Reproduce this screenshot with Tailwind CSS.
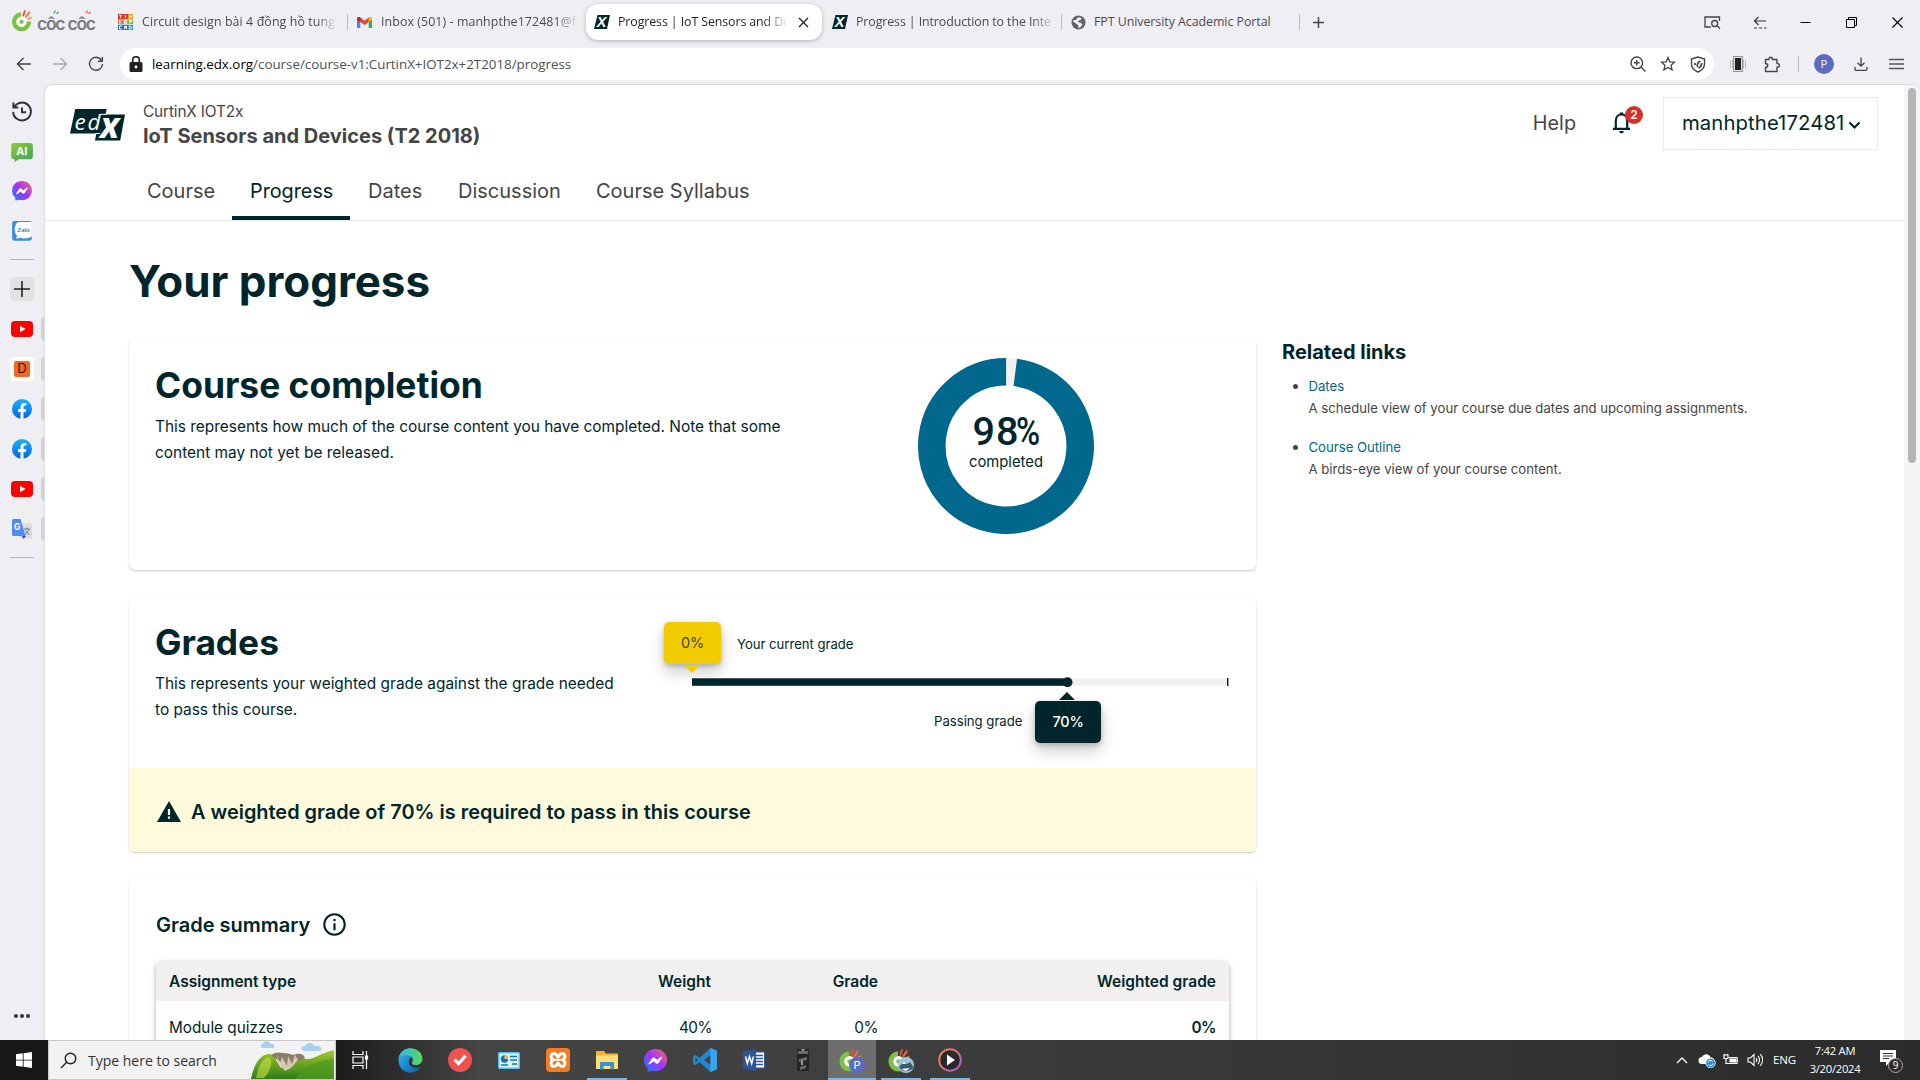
<!DOCTYPE html>
<html lang="en">
<head>
<meta charset="utf-8">
<title>Progress | IoT Sensors and Devices</title>
<script src="https://cdn.jsdelivr.net/npm/@tailwindcss/browser@4"></script>
</head>
<body class="relative flex h-[1080px] w-[1920px] flex-col overflow-hidden bg-[#efeef3] font-['Inter',sans-serif] text-[#454545]">

<svg class="absolute" width="0" height="0">
  <defs>
    <linearGradient id="msg" x1="0" y1="1" x2="1" y2="0"><stop offset="0" stop-color="#0a84ff"/><stop offset=".5" stop-color="#a033ff"/><stop offset="1" stop-color="#ff6968"/></linearGradient>
    <linearGradient id="fbg" x1="0" y1="0" x2="0" y2="1"><stop offset="0" stop-color="#18b0fb"/><stop offset="1" stop-color="#0165e1"/></linearGradient>
    <linearGradient id="aig" x1="0" y1="0" x2="1" y2="1"><stop offset="0" stop-color="#9ac832"/><stop offset="1" stop-color="#39a860"/></linearGradient>
    <linearGradient id="edg" x1="0" y1="0" x2="1" y2="1"><stop offset="0" stop-color="#35c1f1"/><stop offset=".45" stop-color="#1b8fd8"/><stop offset="1" stop-color="#0c59a4"/></linearGradient>
    <linearGradient id="edg2" x1="0" y1="0" x2="1" y2="0"><stop offset="0" stop-color="#2fb8ee"/><stop offset="1" stop-color="#5bd95a"/></linearGradient>
    <linearGradient id="hill" x1="0" y1="0" x2="0" y2="1"><stop offset="0" stop-color="#a5c92c"/><stop offset="1" stop-color="#2f7d18"/></linearGradient>
    <linearGradient id="mp" x1="0" y1="0" x2="1" y2="1"><stop offset="0" stop-color="#f58634"/><stop offset="1" stop-color="#a65bd6"/></linearGradient>
    <symbol id="messenger" viewBox="0 0 24 24"><path fill="url(#msg)" d="M12 0C5.2 0 0 5 0 11.600c0 3.500 1.400 6.500 3.700 8.600L4 24l4-1.200c1.300.3 2.600.5 4 .5 6.800 0 12-5 12-11.700S18.800 0 12 0z"/><path fill="#fff" d="M4.800 15.200 8.400 9.600c.6-.9 1.800-1.100 2.700-.5l2.600 2 4.200-3c.6-.4 1.300.2.900.9l-3.500 5.500c-.6.9-1.800 1.100-2.700.5l-2.600-2-4.200 3c-.6.4-1.400-.2-1-.8z"/></symbol>
    <symbol id="yt" viewBox="0 0 22 16"><rect width="22" height="16" rx="4" fill="#f00"/><path fill="#fff" d="M9 4.700v6.600l5.500-3.300z"/></symbol>
    <symbol id="fb" viewBox="0 0 20 20"><circle cx="10" cy="10" r="10" fill="url(#fbg)"/><path fill="#fff" d="M8.500 20v-7H6v-3h2.500V8c0-2.600 1.500-4 3.800-4 1 0 2 .2 2 .2v2.400h-1.200c-1.200 0-1.600.7-1.600 1.500V10h2.700l-.4 3h-2.300v7z"/></symbol>
    <symbol id="edxfav" viewBox="0 0 16 16"><path fill="#00262b" d="M3.500 1H16l-3 14H0z"/><text x="2.700" y="13.400" font-size="14.500" font-weight="800" font-style="italic" fill="#fff" font-family="Liberation Sans">X</text></symbol>
    <symbol id="coc" viewBox="0 0 22 26"><path fill="#7cc142" d="M10 4.500A10.500 10.500 0 1 0 21 15l-5.200-.5A5.500 5.500 0 1 1 10 9.600z"/><circle cx="10.500" cy="15" r="5.600" fill="#fff"/><circle cx="10.500" cy="15" r="2.300" fill="#7cc142"/><path stroke="#e8502e" stroke-width="2" stroke-linecap="round" d="m12.500 8 1.500-5"/><path stroke="#f36d3b" stroke-width="2" stroke-linecap="round" d="m15.500 9.500 3.500-5"/><path stroke="#f58b54" stroke-width="1.600" stroke-linecap="round" d="m18 12 3-2"/></symbol>
  </defs>
</svg>

<!-- tab strip -->
<div class="flex h-12 shrink-0 items-start pt-1 font-['Open_Sans',sans-serif] text-[12.400px] text-[#4a4a4e]">
  <div class="flex h-9 w-[106px] items-center pl-3">
    <svg width="84" height="26" viewBox="0 0 84 26"><use href="#coc" width="20" height="24" x="0" y="-1"/><text x="25" y="21" font-family="Inter" font-size="17.500" font-weight="600" fill="#7b7b7e" textLength="59">côc côc</text><path stroke="#4caf50" stroke-width="1.300" d="m42 4.500 1.500-3m1 3.500 2-2"/><path stroke="#f4623a" stroke-width="1.300" d="m74 4.500 1.500-3m1 3.500 2-2"/></svg>
  </div>
  <div class="flex h-9 w-[241px] items-center pl-3">
    <svg width="15" height="16" viewBox="0 0 15 16"><path fill="#e8322c" d="M0 0h5v5H0zM5 0h5v5H5z"/><path fill="#f39a1f" d="M10 0h5v5h-5zM5 5.500h5v4.500H5z"/><path fill="#f2602a" d="M0 5.500h5v4.500H0z"/><path fill="#74b742" d="M10 5.500h5v4.500h-5z"/><path fill="#1e74bb" d="M0 10.800h5V16H0zM5 10.800h5V16H5z"/><path fill="#2f95d0" d="M10 10.800h5V16h-5z"/><path stroke="#fff" stroke-width="1" fill="none" d="M1 1.500h3M2.500 1.500v2.500M7.500 1v3M11.500 4V1.300l2 2.400V1M1.500 6v3.500M3.500 6 2 7.800l1.500 1.700M9 6.300H6.500v3H9M6.500 7.800h2M11.500 9.500V6.300h2v1.500h-2M3.800 12H1.500v3h2.300M6.500 15.200v-3h2v3M6.500 13.800h2M11.500 12.200v3h1l1-1v-1l-1-1z"/></svg>
    <span class="ml-[9px] w-[193px] overflow-hidden whitespace-nowrap tracking-[0.1px] [mask-image:linear-gradient(to_right,#000_175px,transparent_195px)]">Circuit design bài 4 đồng hồ tung</span>
  </div>
  <div class="flex h-9 w-[239px] items-center">
    <span class="h-4 w-px bg-[#bdbcc2]"></span>
    <svg class="ml-[9px]" width="15" height="11" viewBox="0 0 15 11"><path fill="#4285f4" d="M0 1.500V11h3.300V5z"/><path fill="#34a853" d="M15 1.500V11h-3.300V5z"/><path fill="#ea4335" d="M0 1.500C0 0 2-.6 3.300.5L7.500 3.800 11.700.5C13 -.6 15 0 15 1.500L11.700 5 7.500 8 3.300 5z"/><path fill="#c5221f" d="M0 1.500C0 .2 2-.6 3.300.5V5L0 2.700z"/><path fill="#fbbc04" d="M15 1.500C15 .2 13-.6 11.700.5V5L15 2.700z"/></svg>
    <span class="ml-[9px] w-[196px] overflow-hidden whitespace-nowrap tracking-[0.080px] [mask-image:linear-gradient(to_right,#000_175px,transparent_198px)]">Inbox (501) - manhpthe172481@f</span>
  </div>
  <div class="flex h-9 w-[236px] items-center rounded-xl bg-white pl-2 text-[#1f1f22] shadow-[0_1px_4px_rgba(0,0,0,0.25)]">
    <svg width="16" height="16"><use href="#edxfav"/></svg>
    <span class="ml-2 w-[168px] overflow-hidden whitespace-nowrap tracking-[-0.100px] [mask-image:linear-gradient(to_right,#000_145px,transparent_170px)]">Progress | IoT Sensors and De</span>
    <svg class="ml-3" width="11" height="11" fill="none" stroke="#222" stroke-width="1.300"><path d="m1 1 9 9M10 1l-9 9"/></svg>
  </div>
  <div class="flex h-9 w-[239px] items-center pl-[10px]">
    <svg width="16" height="16"><use href="#edxfav"/></svg>
    <span class="ml-2 w-[196px] overflow-hidden whitespace-nowrap tracking-[-0.100px] [mask-image:linear-gradient(to_right,#000_176px,transparent_200px)]">Progress | Introduction to the Inte</span>
  </div>
  <div class="flex h-9 w-[238px] items-center">
    <span class="h-4 w-px bg-[#bdbcc2]"></span>
    <svg class="ml-[9px]" width="15" height="15" viewBox="0 0 15 15"><circle cx="7.500" cy="7.500" r="7" fill="#5f6368"/><path fill="#efeef3" d="M8 2.200 10.500 3l-.8 2-2.200.7-.5 1.600 3 .4 1.300 2-1.600 2.300-2.400 1.200.2-2.300L5.800 9 2 6.500l.4-1.200L5 5l1.200-2z"/></svg>
    <span class="ml-2 whitespace-nowrap tracking-[-0.050px]">FPT University Academic Portal</span>
  </div>
  <div class="flex h-9 items-center">
    <span class="h-4 w-px bg-[#bdbcc2]"></span>
    <svg class="ml-3" width="13" height="13" fill="none" stroke="#444" stroke-width="1.500"><path d="M6.500 1v11M1 6.500h11"/></svg>
  </div>
  <div class="ml-auto mr-[17px] flex h-9 items-center text-[#222]">
    <svg class="mr-8" width="17" height="13" viewBox="0 0 17 13" fill="none" stroke="#444" stroke-width="1.300"><path d="M7 11H1V1h14.500v4"/><circle cx="10.700" cy="7.500" r="3"/><path d="m13 9.700 3 2.800"/></svg>
    <svg class="mr-[33px]" width="14" height="13" viewBox="0 0 14 13" fill="none" stroke="#333" stroke-width="1.200"><path d="M5.500 1 1.500 5l4 4M1.500 5H13"/><path stroke-dasharray="3 2" d="M1 12h12.500"/></svg>
    <svg class="mr-[35px]" width="11" height="11"><path stroke="#000" d="M.5 5.500h10"/></svg>
    <svg class="mr-[35px]" width="11" height="11" fill="none" stroke="#000"><path d="M.5 2.500h8v8h-8zM2.500 2.500v-2h8v8h-2"/></svg>
    <svg width="11" height="11" fill="none" stroke="#000" stroke-width="1.100"><path d="m.5.5 10 10m0-10-10 10"/></svg>
  </div>
</div>

<!-- toolbar -->
<div class="flex h-8 shrink-0 items-center">
  <div class="flex w-[120px] items-center pl-4">
    <svg class="mr-[20px]" width="16" height="14" viewBox="0 0 16 14" fill="none" stroke="#444" stroke-width="1.400"><path d="M7.500 1 1.500 7l6 6M1.500 7H15"/></svg>
    <svg class="mr-[20px]" width="16" height="14" viewBox="0 0 16 14" fill="none" stroke="#a9a8ae" stroke-width="1.400"><path d="m8.500 1 6 6-6 6M14.500 7H1"/></svg>
    <svg width="16" height="16" viewBox="0 0 16 16" fill="none" stroke="#444" stroke-width="1.400"><path d="M13.300 4A6.500 6.500 0 1 0 14.500 8M14.300 1v4.300H10"/></svg>
  </div>
  <div class="flex h-8 w-[1594px] items-center rounded-full bg-white pl-[9px] pr-2">
    <svg width="14" height="17" viewBox="0 0 14 17"><path fill="#222" d="M2 6h10a1.500 1.500 0 0 1 1.500 1.500v7A1.500 1.500 0 0 1 12 16H2a1.500 1.500 0 0 1-1.500-1.500v-7A1.500 1.500 0 0 1 2 6z"/><path fill="none" stroke="#222" stroke-width="1.600" d="M3.700 7V4a3.300 3.300 0 0 1 6.600 0v3"/><circle cx="7" cy="11" r="1.400" fill="#fff"/></svg>
    <span class="ml-[9px] whitespace-nowrap font-['Open_Sans',sans-serif] text-[13.350px] text-[#4d5156]"><span class="text-black">learning.edx.org</span>/course/course-v1:CurtinX+IOT2x+2T2018/progress</span>
    <div class="ml-auto flex items-center gap-[14px]">
      <svg width="16" height="16" viewBox="0 0 16 16" fill="none" stroke="#444" stroke-width="1.400"><circle cx="6.800" cy="6.800" r="5.800"/><path d="m11 11 4.500 4.500M4 6.800h5.600M6.800 4v5.600"/></svg>
      <svg width="16" height="16" viewBox="0 0 16 16" fill="none" stroke="#444" stroke-width="1.300"><path d="m8 1.500 1.900 4.300 4.700.4-3.600 3.100 1.100 4.600L8 11.500l-4.100 2.400L5 9.300 1.400 6.200l4.700-.4z"/></svg>
      <svg width="16" height="17" viewBox="0 0 16 17" fill="none" stroke="#444" stroke-width="1.400"><path d="M8 1 1.500 3v5c0 4 3 6.500 6.500 8 3.500-1.500 6.500-4 6.500-8V3z"/><path stroke-width="1.700" d="M5.500 9 4.500 7M7.500 11c-.5-3 .5-5 3-6M8.500 12c1.500-.5 3-2 3.200-5"/></svg>
    </div>
  </div>
  <div class="ml-auto mr-[16px] flex items-center">
    <svg class="mr-[18px]" width="16" height="16" viewBox="0 0 16 16"><path fill="none" stroke="#bbb" d="M.5 4.500v8M2.500 3.500v9M13.500 3.500v9M15.500 4.500v8"/><rect x="3.500" y=".5" width="9" height="15" fill="#ddd" stroke="#999"/><rect x="5" y="2" width="6" height="12" fill="#222"/></svg>
    <svg class="mr-[17px]" width="17" height="17" viewBox="0 0 17 17" fill="none" stroke="#444" stroke-width="1.400"><path stroke-linejoin="round" d="M1.500 3.500H5c-.3-3 3.700-3 3.400 0H13v4c3.300-.2 3.300 3.800 0 3.600v4.400H1.500v-4c3-.2 3-3.800 0-4z"/></svg>
    <span class="mr-[15px] h-4 w-px bg-[#bdbcc2]"></span>
    <span class="mr-5 flex size-5 items-center justify-center rounded-full bg-[#5c6bc0] text-[10px] text-white">P</span>
    <svg class="mr-[21px]" width="14" height="14" viewBox="0 0 14 14" fill="none" stroke="#444" stroke-width="1.300"><path d="M7 .5v8.500M3.500 5.800 7 9.200l3.500-3.400M1 10v2.300c0 .6.300 1 1 1h10c.7 0 1-.4 1-1V10"/></svg>
    <svg width="15" height="12" fill="none" stroke="#555" stroke-width="1.400"><path d="M0 1.500h15M0 6h15M0 10.500h15"/></svg>
  </div>
</div>

<div class="flex h-[960px] shrink-0 pt-1">
  <!-- browser sidebar -->
  <div class="flex w-11 shrink-0 flex-col">
    <div class="flex h-[176px] flex-col items-center pt-[17px]">
      <svg width="22" height="22" viewBox="0 0 22 22" fill="none" stroke="#333" stroke-width="2"><path d="M3 6.500A9 9 0 1 1 2 11M2.300 1.500v5h5"/><path d="M11 6.500v5h4"/></svg>
      <svg class="mt-5" width="22" height="20" viewBox="0 0 22 20"><rect width="22" height="16.500" rx="3" fill="url(#aig)"/><path fill="#58b04e" d="M3.500 15v4.500L9 15z"/><text x="11" y="12.300" text-anchor="middle" font-family="Open Sans" font-weight="700" font-size="11" fill="#fff">AI</text></svg>
      <svg class="mt-[19px]" width="20" height="20"><use href="#messenger"/></svg>
      <svg class="mt-5" width="20" height="20" viewBox="0 0 20 20"><rect width="20" height="20" rx="2.500" fill="#3a8fdb"/><path fill="#fff" d="M6 1h14v14.500c-2 2-8 3-11.500 1.500L4 18l1-3C1.500 11 2 4 6 1z"/><text x="11.500" y="11" text-anchor="middle" font-size="6.500" font-weight="700" fill="#2f7fd3" font-family="Lato">Zalo</text></svg>
      <div class="mt-[18px] h-px w-6 shrink-0 bg-[#b5b4b9]"></div>
    </div>
    <div class="flex flex-col">
      <div class="mt-[17px] flex h-6 items-center pl-[10px]"><div class="flex size-6 items-center justify-center rounded bg-[#e2e2e2]"><svg width="16" height="16" stroke="#222" stroke-width="1.600"><path d="M8 0v16M0 8h16"/></svg></div></div>
      <div class="mt-4 flex h-6 items-center justify-between pl-[11px]"><svg width="22" height="16"><use href="#yt"/></svg><span class="h-6 w-[3px] rounded-l bg-[#d2d2d4]"></span></div>
      <div class="mt-4 flex h-6 items-center justify-between pl-[10px]"><span class="flex size-6 items-center justify-center rounded bg-white"><span class="flex size-4 items-center justify-center rounded-xs bg-[#f26722] text-[13px] text-[#222]">D</span></span><span class="h-6 w-[3px] rounded-l bg-[#d2d2d4]"></span></div>
      <div class="mt-4 flex h-6 items-center justify-between pl-3"><svg width="20" height="20"><use href="#fb"/></svg><span class="h-6 w-[3px] rounded-l bg-[#d2d2d4]"></span></div>
      <div class="mt-4 flex h-6 items-center justify-between pl-3"><svg width="20" height="20"><use href="#fb"/></svg><span class="h-6 w-[3px] rounded-l bg-[#d2d2d4]"></span></div>
      <div class="mt-4 flex h-6 items-center justify-between pl-[11px]"><svg width="22" height="16"><use href="#yt"/></svg><span class="h-6 w-[3px] rounded-l bg-[#d2d2d4]"></span></div>
      <div class="mt-4 flex h-6 items-center justify-between pl-3"><svg width="20" height="20" viewBox="0 0 20 20"><rect x="8" y="4.500" width="12" height="15" rx="1.500" fill="#dadce0"/><path d="M12 10h6M15 8.500V10M17 10c-.5 2.500-2.500 4.500-4 5.500M13.500 11.500c1 2 2.500 3.500 4 4" stroke="#5f7d95" fill="none"/><path fill="#3347a8" d="m10 17 1.500 3L14 17z"/><path fill="#4f8bf0" d="M1.500 0h7L13.500 17h-12A1.500 1.500 0 0 1 0 15.500v-14A1.500 1.500 0 0 1 1.500 0z"/><text x="2" y="11" font-size="8.500" font-weight="700" fill="#fff">G</text></svg><span class="h-6 w-[3px] rounded-l bg-[#d2d2d4]"></span></div>
      <div class="ml-[10px] mt-4 h-px w-6 bg-[#b5b4b9]"></div>
    </div>
    <div class="mb-[22px] mt-auto flex gap-[2px] pl-[14px]"><i class="size-1 rounded-full bg-[#333]"></i><i class="size-1 rounded-full bg-[#333]"></i><i class="size-1 rounded-full bg-[#333]"></i></div>
  </div>

  <!-- page viewport -->
  <div class="flex h-[956px] flex-1 overflow-hidden rounded-t-lg border-l border-t border-[#dcdcdf] bg-white">
    <div class="w-[1859px] shrink-0">
      <header class="border-b border-[#e7e8e9]">
        <div class="flex h-[83px] items-start pl-[25px]">
          <svg class="mt-6" width="55" height="32" viewBox="0 0 55 32"><path fill="#00262b" d="M5.200 0h31.500l-1.200 5.500H55l-4.800 26H25l1.300-7H0z"/><path stroke="#fff" stroke-width="1" fill="none" d="M25.500 24.500h4.500M30.700 5.300H37"/><text x="4.500" y="20.700" font-family="Open Sans" font-style="italic" font-size="22.500" fill="#fff" textLength="26">ed</text><text x="30" y="28.500" font-family="Open Sans" font-style="italic" font-weight="800" font-size="28.500" fill="#fff">X</text></svg>
          <div class="ml-[18px] mt-[15px]">
            <div class="text-[15.400px] leading-6 tracking-[-0.150px]">CurtinX IOT2x</div>
            <div class="text-xl font-bold leading-6">IoT Sensors and Devices (T2 2018)</div>
          </div>
          <div class="ml-auto mr-[26px] mt-3 flex items-center">
            <span class="text-[19.800px]">Help</span>
            <div class="relative -mt-1 ml-[36px] h-6 w-5">
              <svg width="20" height="24" viewBox="0 0 20 24" fill="none" stroke="#00262b" stroke-width="2.200"><path d="M1 18.800h17M3.800 19V11c0-3.500 2-6.500 5.700-6.500s5.700 3 5.700 6.500v8"/><path fill="#00262b" stroke="none" d="M7.800 2.500h3.400V5H7.800zM7.300 21h4.400c0 1.600-1 2.300-2.200 2.300S7.300 22.600 7.300 21z"/></svg>
              <span class="absolute -top-[4px] left-[13px] flex size-[18px] items-center justify-center rounded-full bg-[#d23228] text-[12px] font-semibold text-white">2</span>
            </div>
            <div class="ml-[31px] flex h-[53px] w-[215px] items-center border border-[#ebebeb] pl-[18px] text-[#00262b]">
              <span class="text-[20.300px] tracking-[0.100px]">manhpthe172481</span>
              <svg class="ml-1 mt-1" width="13" height="9" viewBox="0 0 13 9" fill="none" stroke="#00262b" stroke-width="2.200"><path d="m1.500 1.500 5 5 5-5"/></svg>
            </div>
          </div>
        </div>
        <nav class="flex h-[52px] pl-[84px] text-[20px] leading-6">
          <a class="w-[103px] pl-[18px] pt-[11px]">Course</a>
          <a class="w-[118px] border-b-4 border-[#00262b] pl-[18px] pt-[11px] text-[19.800px] text-[#00262b]">Progress</a>
          <a class="w-[90px] pl-[18px] pt-[11px]">Dates</a>
          <a class="w-[138px] pl-[18px] pt-[11px]">Discussion</a>
          <a class="pl-[18px] pt-[11px]">Course Syllabus</a>
        </nav>
      </header>

      <main class="flex flex-col pl-[84px] pt-[36px] text-[#00262b]">
        <h1 class="text-[43.900px] font-bold leading-[48px]">Your progress</h1>
        <div class="mt-[33px] flex">
          <div class="flex w-[1127px] flex-col">
            <section class="flex h-[232px] rounded-md pl-[26px] shadow-[0_1px_2px_rgba(0,0,0,0.22)]">
              <div class="w-[763px] pt-[26px]">
                <h2 class="text-[35.400px] font-bold leading-[44px]">Course completion</h2>
                <p class="mt-[6px] w-[640px] text-[15.430px] leading-[26.400px]">This represents how much of the course content you have completed. Note that some content may not yet be released.</p>
              </div>
              <svg class="mt-5" width="176" height="176" viewBox="0 0 176 176">
                <circle cx="88" cy="88" r="74.200" fill="none" stroke="#f2f0ef" stroke-width="27.600"/>
                <circle cx="88" cy="88" r="74.200" fill="none" stroke="#00688d" stroke-width="27.600" pathLength="100" stroke-dasharray="98 2" transform="rotate(-82.800 88 88)"/>
                <text x="54.500" y="86.500" font-family="Roboto" font-weight="500" font-size="39.500" fill="#00262b" letter-spacing="1">98</text>
                <text transform="translate(98 86.500) scale(.83 1)" font-family="Roboto" font-weight="500" font-size="39.500" fill="#00262b">%</text>
                <text x="88" y="109" text-anchor="middle" font-family="Inter" font-size="14.800" fill="#00262b">completed</text>
              </svg>
            </section>

            <section class="mt-[27px] flex h-[255px] flex-col rounded-md shadow-[0_1px_2px_rgba(0,0,0,0.22)]">
              <div class="flex h-[171px] pl-[26px]">
                <div class="w-[509px] pt-6">
                  <h2 class="text-[35.300px] font-bold leading-[44px]">Grades</h2>
                  <p class="mt-[6px] w-[470px] text-[15.430px] leading-[26.400px]">This represents your weighted grade against the grade needed to pass this course.</p>
                </div>
                <div class="relative w-[565px]">
                  <svg class="absolute left-0 top-0" width="565" height="171" viewBox="0 0 565 171">
                    <rect x="28" y="81.500" width="537" height="7" fill="#f2f0ef"/>
                    <rect x="28" y="81.300" width="375" height="7.500" fill="#00262b"/>
                    <rect x="563" y="81" width="1.400" height="8" fill="#00262b"/>
                    <circle cx="403.500" cy="85.200" r="5" fill="#00262b"/>
                  </svg>
                  <div class="absolute left-0 top-[25px] flex h-[42px] w-[57px] items-center justify-center rounded-[5px] bg-[#f0cc00] text-[14.500px] tracking-[-0.300px] text-[#454545] shadow-[0_8px_16px_rgba(0,0,0,0.2),0_2px_5px_rgba(0,0,0,0.2)]">0%</div>
                  <svg class="absolute left-5 top-[68px]" width="16" height="8"><path fill="#f0cc00" d="M0 0h16L8 8z"/></svg>
                  <span class="absolute left-[73px] top-[37px] text-[13.100px] leading-5">Your current grade</span>
                  <span class="absolute left-[270px] top-[114px] text-[13.150px] leading-5">Passing grade</span>
                  <svg class="absolute left-[395px] top-[95px]" width="16" height="8"><path fill="#00262b" d="M0 8h16L8 0z"/></svg>
                  <div class="absolute left-[371px] top-[104px] flex h-[42px] w-[66px] items-center justify-center rounded-[5px] bg-[#00262b] text-[14.500px] font-medium tracking-[-0.200px] text-white shadow-[0_8px_16px_rgba(0,0,0,0.2),0_2px_5px_rgba(0,0,0,0.2)]">70%</div>
                </div>
              </div>
              <div class="flex h-[84px] items-center rounded-b-md bg-[#fffadb] pl-[28px] pt-[3px]">
                <svg width="24" height="21" viewBox="0 0 24 21"><path fill="#00262b" d="M12 0 24 21H0z"/><path fill="#fffadb" d="M10.900 8h2.200v6h-2.200zM10.900 15.600h2.200v2.200h-2.200z"/></svg>
                <span class="ml-[10px] pt-[2px] text-[19.920px] font-semibold">A weighted grade of 70% is required to pass in this course</span>
              </div>
            </section>

            <section class="mt-[25px] h-[400px] rounded-md pl-[27px] pt-[33px] shadow-[0_1px_2px_rgba(0,0,0,0.22)]">
              <div class="flex h-7 items-center">
                <h3 class="pt-[2px] text-[20px] font-semibold">Grade summary</h3>
                <svg class="ml-[13px]" width="23" height="23" viewBox="0 0 23 23"><circle cx="11.500" cy="11.500" r="10.200" fill="none" stroke="#00262b" stroke-width="2.100"/><path fill="#00262b" d="M10.400 10.300h2.200v6.900h-2.200zM10.400 6h2.200v2.200h-2.200z"/></svg>
              </div>
              <div class="mt-[23px] h-[340px] w-[1073px] overflow-hidden rounded-t-md text-[15.300px] shadow-[0_2px_5px_rgba(0,0,0,0.35)]">
                <div class="flex h-10 items-center bg-[#f2f0ef] px-[13px] pt-[2px] text-[15.500px] font-semibold">
                  <span class="w-[400px]">Assignment type</span><span class="w-[142px] text-right">Weight</span><span class="w-[167px] text-right">Grade</span><span class="ml-auto">Weighted grade</span>
                </div>
                <div class="flex items-center px-[13px] pt-[15px] leading-6">
                  <span class="w-[400px]">Module quizzes</span><span class="w-[143px] text-right tracking-[-0.500px]">40%</span><span class="w-[166px] text-right tracking-[-0.500px]">0%</span><span class="ml-auto font-semibold tracking-[-0.500px]">0%</span>
                </div>
              </div>
            </section>
          </div>

          <aside class="ml-[26px]">
            <h3 class="text-[20px] font-bold leading-7">Related links</h3>
            <ul class="mt-[9px] text-[13.150px] leading-[22px] text-[#454545]">
              <li class="flex"><i class="ml-[11px] mr-[10.500px] mt-[9px] size-[5px] shrink-0 rounded-full bg-[#454545]"></i><div><a class="text-[#00688d]">Dates</a><p>A schedule view of your course due dates and upcoming assignments.</p></div></li>
              <li class="mt-[17px] flex"><i class="ml-[11px] mr-[10.500px] mt-[9px] size-[5px] shrink-0 rounded-full bg-[#454545]"></i><div><a class="text-[#00688d]">Course Outline</a><p>A birds-eye view of your course content.</p></div></li>
            </ul>
          </aside>
        </div>
      </main>
    </div>
    <div class="w-4 shrink-0 bg-[#f5f5f6] px-1 pt-[3px]"><div class="h-[375px] rounded-full bg-[#b6b6b6]"></div></div>
  </div>
</div>

<!-- taskbar -->
<div class="flex h-10 shrink-0 items-center bg-linear-to-r from-[#1a1a1a] from-17% via-[#454545] via-25% to-[#2b2b2b] font-['Open_Sans',sans-serif] text-white">
  <div class="flex h-10 w-12 items-center justify-center bg-[#181818]"><svg width="16" height="16" fill="#fff"><path d="M0 2.300 6.800 1.300v6.400H0zM7.600 1.200 16 0v7.700H7.600zM0 8.400h6.800v6.400L0 13.800zM7.600 8.400H16V16l-8.400-1.200z"/></svg></div>
  <div class="flex h-10 w-[288px] items-center border border-[#c8c8c8] bg-[#f2f2f2]">
    <svg class="ml-[11px]" width="17" height="17" fill="none" stroke="#222" stroke-width="1.400"><circle cx="10.500" cy="6.500" r="5.300"/><path d="M6.700 10.300 1 16"/></svg>
    <span class="ml-[11px] w-[163px] text-[14px] text-[#333]">Type here to search</span>
    <svg width="83" height="38" viewBox="0 0 83 38">
      <path fill="#a9d0ee" d="M12 7c-3 0-3-4 0-4 1-4 7-3 7 0 4-1 7 4 2 4zM54 10c-5 0-5-5 0-5 2-4 9-4 9 0 7-2 11 5 4 5z"/>
      <path fill="url(#hill)" d="M0 38C3 22 10 13 18 13c5 0 8 8 12 14 5-6 13-9 22-10 9 4 14-4 31-8v29z"/>
      <path fill="#8c7d66" d="M20 14c4-3 8-3 12-2 6 0 10 3 13 1 4-1 7 0 9 3-3 4-8 5-13 8-4 3-6 3-8 0-4-4-9-6-13-10z"/>
      <path fill="#d5c8ac" d="m26 14 3 9 2-7 5 9 1-10 4 8 3-9 3 5-7 8-6 3-7-8z"/>
      <path fill="#c8df47" opacity=".6" d="M8 26c4-8 8-11 11-9 3 4 0 14-6 20H5z"/>
      <path fill="#4d9a1e" opacity=".7" d="M45 38c4-10 15-17 38-20v20z"/>
    </svg>
  </div>
  <div class="flex h-10 w-[49px] items-center justify-center"><svg width="17" height="18" viewBox="0 0 17 18" fill="none" stroke="#fff" stroke-width="1.200"><path d="M1 0v3.500h10V0M1 18v-3.500h10V18M1 6h10v6H1zM14.500 0v18"/><path fill="#fff" d="M13.500 5h2v3h-2z"/></svg></div>
  <div class="flex h-10 w-[50px] items-center justify-center"><svg width="25" height="25" viewBox="0 0 24 24"><path fill="url(#edg)" d="M12 .3C5 .3.500 5.500.500 12S5.500 23.700 12 23.700c4 0 7-1.700 9-4.200.5-.7 0-1.200-.7-.9-4.500 1.700-9.500-.6-10-5.100-.1-2 .6-3.200 2-4.500z"/><path fill="url(#edg2)" d="M.6 10C1.500 4 6.500.3 12 .3c7 0 11.500 5 11.500 10 0 4-3 6-6 6-2.500 0-4.300-1-4.300-2 0-.6 1-1 1-2.800C14.200 8.500 11 7 8 7 4.500 7 1.800 8 .6 10z"/></svg></div>
  <div class="flex h-10 w-[49px] items-center justify-center"><svg width="24" height="24"><circle cx="12" cy="12" r="12" fill="#ef5350"/><path fill="none" stroke="#fff" stroke-width="3.200" d="m6.500 11.500 4 4.200 7-8"/></svg></div>
  <div class="flex h-10 w-[49px] items-center justify-center"><svg width="22" height="17"><rect width="22" height="17" rx="1.500" fill="#5ac2ef"/><path fill="#d9f2fd" d="M1.500 1.500h19v14h-19z"/><circle cx="6.500" cy="7" r="3.700" fill="#1572bd"/><path fill="#f9c137" d="M6.500 7V3.300A3.700 3.700 0 0 1 10.200 7z"/><path stroke="#1572bd" stroke-width="1.700" d="M12 4.500h7M12 8h7M3 13h7M14 12h5"/></svg></div>
  <div class="flex h-10 w-[49px] items-center justify-center"><svg width="24" height="24"><rect width="24" height="24" rx="4" fill="#f47b20"/><g fill="none" stroke="#fff" stroke-width="3" stroke-linejoin="round"><path d="M7.500 11.800C4 10.500 4.500 5.500 8 5.500c2.500 0 3 2.500 4 3.500 1-1 1.500-3.500 4-3.500 3.500 0 4 5 .5 6.300 3.500 1.200 3 6.700-.5 6.700-2.500 0-3-2.500-4-3.500-1 1-1.500 3.500-4 3.500-3.500 0-4-5.500-.5-6.700z"/><path stroke-width="2" d="M8 11.800h8"/></g></svg></div>
  <div class="flex h-10 w-[49px] flex-col items-center"><svg class="mt-[10px]" width="22" height="20" viewBox="0 0 22 20"><path fill="#f5b72c" d="M0 1h8l2 2.500h12V18H0z"/><path fill="#fdde7b" d="M0 5.500h22V19H0z"/><path fill="#3c8fd6" d="M4 12h14v7.500h-3.500V16h-7v3.500H4z"/></svg><div class="mt-auto h-[2px] w-10 bg-[#76b9ed]"></div></div>
  <div class="flex h-10 w-[49px] items-center justify-center"><svg width="23" height="23"><use href="#messenger"/></svg></div>
  <div class="flex h-10 w-[49px] items-center justify-center"><svg width="24" height="24" viewBox="0 0 24 24"><path fill="#1f8ad2" d="M17.500 0 24 2.700v18.600L17.500 24l-11-10L2.500 17 0 15.700v-7.400L2.500 7l4 3z"/><path fill="#404040" d="M17.500 7v10L11 12zM2.500 9.500v5L5 12z"/><path fill="#3ca4ee" d="M17.500 0 24 2.700v18.600L17.500 24z"/></svg></div>
  <div class="flex h-10 w-[49px] items-center justify-center"><svg width="22" height="22" viewBox="0 0 22 22"><path fill="#fff" stroke="#2b579a" d="M12 3h9.500v16H12z"/><path stroke="#2b579a" stroke-width="1.400" d="M13 6.500h7M13 9.500h7M13 12.500h7M13 15.500h7"/><path fill="#2b579a" d="M0 2.500 13 0v22L0 19.500z"/><path fill="none" stroke="#fff" stroke-width="1.500" d="m2.500 7.500 1.800 7 2.200-7 2.200 7 1.800-7"/></svg></div>
  <div class="flex h-10 w-[50px] items-center justify-center"><svg width="14" height="24"><path fill="#252525" d="M1 1h12v22H1z"/><path fill="#6e6a66" d="M2 3h10v3H2zM3 11l8-2v3l-8 2zM4 19l6-2v3l-6 2z"/><path fill="#a19a93" d="M5 1h4L7 4zM5 13h2v4H5z"/></svg></div>
  <div class="flex h-10 w-12 flex-col items-center bg-[#6e6e6e]"><svg class="mt-[7px]" width="27" height="27" viewBox="0 0 27 27"><use href="#coc" width="22" height="25"/><circle cx="18" cy="18" r="8" fill="#5c6bc0"/><text x="18" y="22" text-anchor="middle" font-size="11" fill="#fff" font-family="Inter">P</text></svg><div class="mt-auto h-[2px] w-12 bg-[#76b9ed]"></div></div>
  <div class="ml-[1px] flex h-10 w-[48px] flex-col items-center"><svg class="mt-[7px]" width="27" height="27" viewBox="0 0 27 27"><use href="#coc" width="22" height="25"/><circle cx="18" cy="18" r="8" fill="#9fc4de"/><path fill="#3c5a6b" d="m11 20 5-6 3 3 3-2 3.500 5c-2 5-12 6-14.500 0z"/><path fill="#fff" d="m14 17 2-3 2 3zM13 22l9-1-4 3z"/></svg><div class="mt-auto h-[2px] w-10 bg-[#76b9ed]"></div></div>
  <div class="flex h-10 w-[49px] flex-col items-center"><svg class="mt-2" width="24" height="24"><circle cx="12" cy="12" r="10.800" fill="#2a2a2d" stroke="url(#mp)" stroke-width="2"/><path fill="#fff" d="m9 6.500 8 5.500-8 5.500z"/></svg><div class="mt-auto h-[2px] w-10 bg-[#76b9ed]"></div></div>

  <div class="ml-auto mr-[17px] flex items-center">
    <svg width="12" height="7" fill="none" stroke="#fff" stroke-width="1.300"><path d="m1 6 5-5 5 5"/></svg>
    <svg class="ml-[10px]" width="18" height="15" viewBox="0 0 18 15"><path fill="#fff" d="M4 11a3.500 3.500 0 0 1 0-7C6 0 11.500.5 12.500 4.500c3 0 4 2 3.500 4L10 11z"/><circle cx="12.500" cy="10" r="4.800" fill="#2b88d8" stroke="#fff" stroke-width=".8"/><path fill="none" stroke="#fff" d="M10 9.500a2.500 2.500 0 0 1 4.500-1M15 10.500a2.500 2.500 0 0 1-4.500 1"/></svg>
    <svg class="ml-[7px]" width="16" height="12" viewBox="0 0 16 12" fill="none" stroke="#fff" stroke-width="1.200"><path d="M6 3.500h8v6H4M14.500 5.500v2M1 1h4v3.500H1zM3 4.500v5h1.500M1.500 0v1M4.500 0v1"/><path fill="#fff" d="M7 5h5.500v3H7z"/></svg>
    <svg class="ml-[8px]" width="17" height="14" viewBox="0 0 17 14" fill="none" stroke="#fff" stroke-width="1.100"><path d="M1 5h2.500L7 1.500v11L3.500 9H1zM9 5c.8 1 .8 3 0 4M11 3c2 2 2 6 0 8M13.300 1.200c3 3 3 8.600 0 11.600"/></svg>
    <span class="ml-[9px] w-[24px] text-[11.500px] tracking-[-0.200px]">ENG</span>
    <div class="ml-[5px] w-[66px] text-center text-[11.200px] leading-[18px] tracking-[-0.250px]"><div>7:42 AM</div><div>3/20/2024</div></div>
    <div class="relative ml-[11px] h-[22px] w-[24px]">
      <svg width="18" height="17" viewBox="0 0 18 17"><path fill="#fff" d="M1 1h16v12h-6l-4 4v-4H1z"/><path stroke="#333" stroke-width="1.200" d="M4 4.500h10M4 7h10M4 9.500h6"/></svg>
      <span class="absolute left-[9px] top-[9px] flex size-[15px] items-center justify-center rounded-full border border-[#aaa] bg-[#2d2d2d] text-[10px]">9</span>
    </div>
  </div>
</div>
</body>
</html>
